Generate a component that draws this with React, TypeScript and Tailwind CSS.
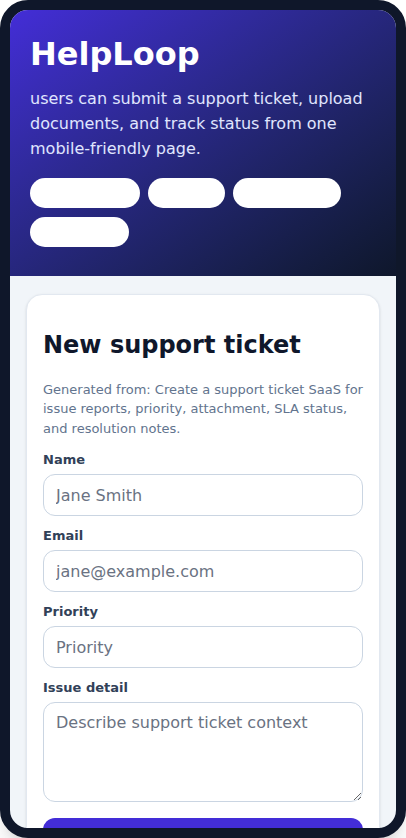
import React from "react";

const pills = ["w-[110px]", "w-[77px]", "w-[108px]", "w-[99px]"];

const Field = ({ label, placeholder, area }: { label: string; placeholder: string; area?: boolean }) => (
  <div className="flex flex-col">
    <label className="text-[13px] leading-5 font-bold text-slate-700 mb-[4px]">{label}</label>
    {area ? (
      <textarea
        placeholder={placeholder}
        className="h-[100px] w-full rounded-xl border border-slate-300 bg-white px-3 py-2 text-base leading-6 text-slate-900 placeholder:text-gray-500 outline-none"
      />
    ) : (
      <input
        placeholder={placeholder}
        className="h-[42px] w-full rounded-xl border border-slate-300 bg-white px-3 py-2 text-base leading-6 text-slate-900 placeholder:text-gray-500 outline-none"
      />
    )}
  </div>
);

export default function App() {
  return (
    <div className="min-h-screen bg-white" style={{ fontFamily: '"DejaVu Sans", Verdana, sans-serif' }}>
      <div className="w-[406px] h-[838px] rounded-[28px] border-[10px] border-[#0f172a] overflow-hidden bg-slate-100 shadow-xl">
        <header className="bg-linear-to-br from-indigo-700 to-slate-900 px-5 pt-[25px] pb-[29px]">
          <h1 className="text-[32px] leading-[1.2] font-bold text-white">HelpLoop</h1>
          <p className="mt-[14px] text-base leading-[1.55] text-indigo-100">
            users can submit a support ticket, upload documents, and track status from one mobile-friendly page.
          </p>
          <div className="mt-[16px] flex flex-wrap gap-x-2 gap-y-[9px]">
            {pills.map((w, i) => (
              <span key={i} className={`${w} h-[30px] rounded-full bg-white`} />
            ))}
          </div>
        </header>

        <main className="px-4 pt-[18px]">
          <section className="rounded-2xl border border-slate-200 bg-white px-4 pt-[34px] pb-6 shadow-sm">
            <h2 className="text-2xl leading-8 font-bold text-slate-900">New support ticket</h2>
            <p className="mt-[19px] text-[13px] leading-[1.5] text-slate-500">
              Generated from: Create a support ticket SaaS for issue reports, priority, attachment, SLA status, and resolution notes.
            </p>
            <form className="mt-3 flex flex-col gap-[10px]">
              <Field label="Name" placeholder="Jane Smith" />
              <Field label="Email" placeholder="jane@example.com" />
              <Field label="Priority" placeholder="Priority" />
              <Field label="Issue detail" placeholder="Describe support ticket context" area />
              <button type="button" className="mt-[6px] h-[44px] w-full rounded-xl bg-indigo-700 text-base font-bold text-white">
                Submit ticket
              </button>
            </form>
          </section>
        </main>
      </div>
    </div>
  );
}
